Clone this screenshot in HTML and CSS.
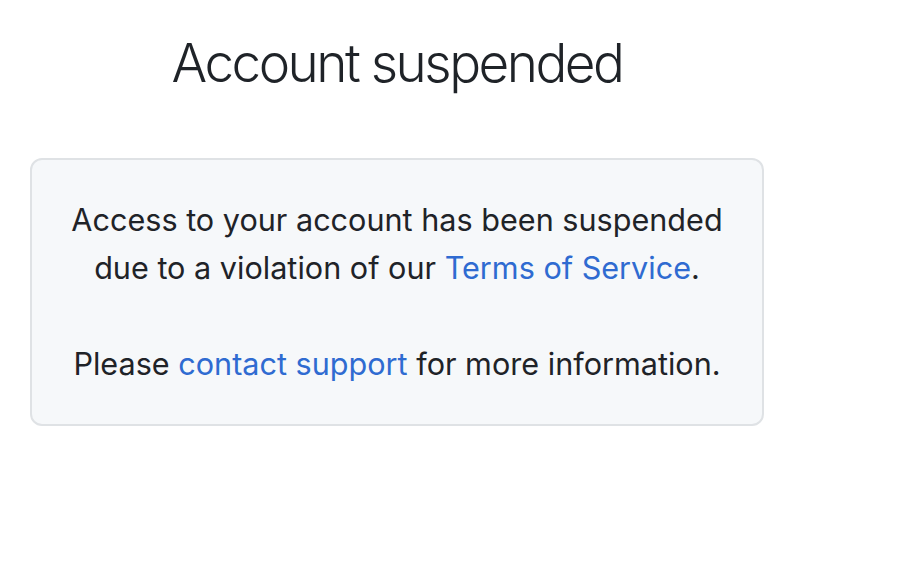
FILE: index.html
```html
<!DOCTYPE html>
<html>
<head>
<meta charset="utf-8">
<link rel="stylesheet" href="styles.css">
</head>
<body>
<main class="container">
  <h1 class="title">Account suspended</h1>
  <div class="box">
    <p>Access to your account has been suspended due to a violation of our <a href="#">Terms of Service</a>.</p>
    <p>Please <a href="#">contact support</a> for more information.</p>
  </div>
</main>
</body>
</html>
```
FILE: styles.css
```css
html, body {
  margin: 0;
  padding: 0;
  background: #ffffff;
}
body {
  font-family: Inter, "Liberation Sans", Arial, sans-serif;
  color: #1f2328;
}
.container {
  width: 734px;
  margin-left: 30px;
  padding-top: 28px;
}
.title {
  margin: 0;
  text-align: center;
  font-size: 53px;
  font-weight: 350;
  line-height: 70px;
  letter-spacing: -2.5px;
}
.box {
  margin-top: 60px;
  box-sizing: border-box;
  height: 268px;
  background: #f6f8fa;
  border: 2px solid #dfe2e5;
  border-radius: 12px;
  padding: 36px 30px;
  text-align: center;
  font-size: 30.6px;
  line-height: 48px;
}
.box p {
  margin: 0 0 48px 0;
}
.box p:last-child {
  margin-bottom: 0;
}
.box a {
  color: #2f6bd1;
  text-decoration: none;
}
```
